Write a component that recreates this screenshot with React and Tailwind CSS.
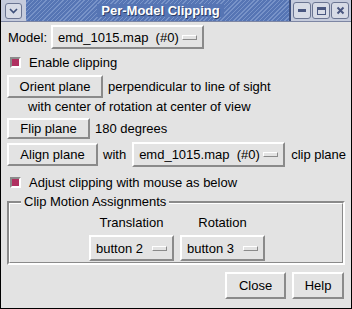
import React from 'react';

const raised = 'border-2 border-t-white border-l-white border-r-[#8a8a8a] border-b-[#8a8a8a]';

function Btn({ children, className = '' }) {
  return (
    <div className={`bg-[#e3e3e3] ${raised} flex items-center justify-center shrink-0 whitespace-nowrap ${className}`}>
      {children}
    </div>
  );
}

function OptionMenu({ label, className = '' }) {
  return (
    <div className={`bg-[#e3e3e3] ${raised} flex items-center justify-between pl-[5px] pr-[5px] shrink-0 whitespace-pre ${className}`}>
      <span>{label}</span>
      <span className="w-[15px] h-[5px] bg-[#e3e3e3] border border-t-white border-l-white border-r-[#8a8a8a] border-b-[#8a8a8a]" />
    </div>
  );
}

function Check({ label, className = '' }) {
  return (
    <div className={`flex items-center whitespace-nowrap ${className}`}>
      <span className="w-[11px] h-[11px] bg-[#b03060] border-2 border-t-[#8a8a8a] border-l-[#8a8a8a] border-r-white border-b-white ml-[3px] mr-[8px] shrink-0" />
      <span>{label}</span>
    </div>
  );
}

function TitleButton({ children }) {
  return (
    <div className="w-[18px] h-[17px] rounded-[3px] border border-[#6b7592] bg-[#d7dbe6] flex items-center justify-center">
      {children}
    </div>
  );
}

export default function App() {
  return (
    <div
      className="w-[352px] h-[309px] bg-[#e3e3e3] text-black text-[13px] leading-none flex flex-col border-l border-r border-b border-black overflow-hidden"
      style={{ fontFamily: '"Liberation Sans", Arial, sans-serif' }}
    >
      {/* Title bar */}
      <div className="h-[22px] flex items-stretch bg-[#c5cbdc] border-b border-[#7d86a3] shrink-0">
        <div className="w-[25px] flex items-center justify-center">
          <div className="w-[17px] h-[16px] rounded-[3px] border border-[#6b7592] bg-[#d7dbe6] flex items-center justify-center">
            <svg width="9" height="6" viewBox="0 0 9 6">
              <path d="M1 1 L4.5 4.5 L8 1" stroke="#3d4f7a" strokeWidth="1.6" fill="none" />
            </svg>
          </div>
        </div>
        <div
          className="flex-1 flex items-center justify-center text-white font-bold text-[13px]"
          style={{
            backgroundColor: '#5675b4',
            backgroundImage:
              'repeating-linear-gradient(135deg, #5675b4 0px, #5675b4 2px, #7893c8 2px, #7893c8 3px)',
            textShadow: '1px 1px 0 #2d3f68',
          }}
        >
          <span className="bg-[#5675b4] px-[4px] ml-[6px]">Per-Model Clipping</span>
        </div>
        <div className="w-[2px] bg-[#3c4f7e]" />
        <div className="flex items-center gap-[1px] px-[2px]">
          <TitleButton>
            <span className="w-[8px] h-[3px] bg-[#4a5780]" />
          </TitleButton>
          <TitleButton>
            <span className="w-[9px] h-[8px] border border-[#4a5780] border-t-[3px]" />
          </TitleButton>
          <TitleButton>
            <svg width="9" height="9" viewBox="0 0 9 9">
              <path d="M1.5 1.5 L7.5 7.5 M7.5 1.5 L1.5 7.5" stroke="#4a5780" strokeWidth="2" />
            </svg>
          </TitleButton>
        </div>
      </div>

      {/* Body */}
      <div className="flex flex-col px-[6px] pt-[3px] whitespace-nowrap">
        <div className="flex items-center h-[24px]">
          <span className="ml-[1px] mr-[4px]">Model:</span>
          <OptionMenu label="emd_1015.map  (#0)" className="w-[153px] h-[24px]" />
        </div>

        <Check label="Enable clipping" className="h-[15px] mt-[6px]" />

        <div className="flex items-center mt-[5px]">
          <Btn className="w-[96px] h-[23px]">Orient plane</Btn>
          <span className="ml-[5px]">perpendicular to line of sight</span>
        </div>
        <div className="ml-[21px] h-[15px] mt-[1px] flex items-center">with center of rotation at center of view</div>

        <div className="flex items-center mt-[4px]">
          <Btn className="w-[83px] h-[21px]">Flip plane</Btn>
          <span className="ml-[5px]">180 degrees</span>
        </div>

        <div className="flex items-center mt-[3px]">
          <Btn className="w-[91px] h-[23px]">Align plane</Btn>
          <span className="ml-[5px] mr-[6px]">with</span>
          <OptionMenu label="emd_1015.map  (#0)" className="w-[153px] h-[25px]" />
          <span className="ml-[6px]">clip plane</span>
        </div>

        <Check label="Adjust clipping with mouse as below" className="h-[15px] mt-[8px]" />

        {/* Group box */}
        <div className="relative mt-[11px] mx-0 h-[64px] border-2 border-t-[#8a8a8a] border-l-[#8a8a8a] border-r-white border-b-white">
          <div className="absolute inset-0 border border-t-white border-l-white border-r-[#8a8a8a] border-b-[#8a8a8a]" />
          <span className="absolute -top-[8px] left-[12px] px-[3px] bg-[#e3e3e3]">Clip Motion Assignments</span>
          <div className="flex justify-center gap-[6px] mt-[13px] ml-[2px]">
            <div className="flex flex-col items-center">
              <span className="h-[14px]">Translation</span>
              <OptionMenu label="button 2" className="w-[85px] h-[26px] mt-[5px]" />
            </div>
            <div className="flex flex-col items-center">
              <span className="h-[14px]">Rotation</span>
              <OptionMenu label="button 3" className="w-[85px] h-[26px] mt-[5px]" />
            </div>
          </div>
        </div>

        <div className="flex justify-end gap-[6px] mt-[7px] mr-[1px]">
          <Btn className="w-[61px] h-[27px]">Close</Btn>
          <Btn className="w-[52px] h-[27px]">Help</Btn>
        </div>
      </div>
    </div>
  );
}
